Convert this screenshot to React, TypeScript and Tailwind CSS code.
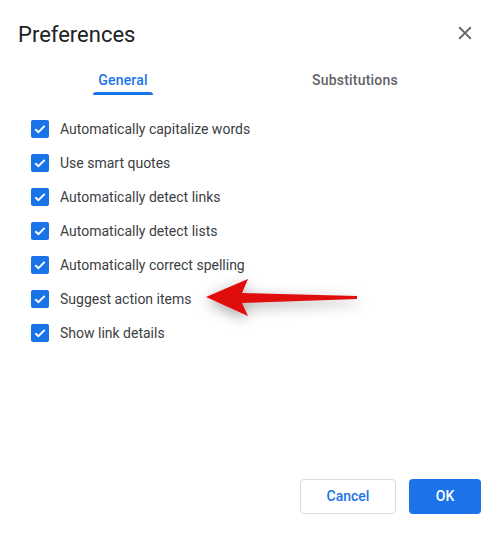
import React from "react";

const items = [
  "Automatically capitalize words",
  "Use smart quotes",
  "Automatically detect links",
  "Automatically detect lists",
  "Automatically correct spelling",
  "Suggest action items",
  "Show link details",
];

function Check() {
  return (
    <div className="w-[18px] h-[18px] rounded-[2px] bg-[#1a73e8] flex items-center justify-center shrink-0">
      <svg width="18" height="18" viewBox="0 0 18 18">
        <path d="M4.3 9.2 L7.4 12.2 L13.7 5.9" fill="none" stroke="#fff" strokeWidth="2" />
      </svg>
    </div>
  );
}

export default function App() {
  return (
    <div className="relative w-[502px] h-[535px] bg-white flex flex-col font-['Roboto',sans-serif] overflow-hidden">
      <div className="flex items-start justify-between pt-[21px] pl-[18px] pr-[26px]">
        <div className="text-[22px] leading-[28px] text-[#202124]">Preferences</div>
        <svg width="22" height="22" viewBox="0 0 24 24" className="mt-[1px]">
          <path
            fill="#5f6368"
            d="M19 6.41L17.59 5 12 10.59 6.41 5 5 6.41 10.59 12 5 17.59 6.41 19 12 13.41 17.59 19 19 17.59 13.41 12z"
          />
        </svg>
      </div>

      <div className="flex ml-[7px] mt-[21px]">
        <div className="w-[232px] flex justify-center">
          <div className="flex flex-col items-center">
            <div className="px-[5px] text-[14px] leading-[20px] font-medium text-[#1a73e8] tracking-[0.2px]">General</div>
            <div className="mt-[2px] h-[3px] w-full rounded-t-[3px] bg-[#1a73e8]" />
          </div>
        </div>
        <div className="w-[232px] flex justify-center">
          <div className="flex flex-col items-center">
            <div className="px-[5px] text-[14px] leading-[20px] font-medium text-[#5f6368] tracking-[0.2px]">Substitutions</div>
            <div className="mt-[2px] h-[3px]" />
          </div>
        </div>
      </div>

      <div className="flex flex-col mt-[17px] pl-[31px]">
        {items.map((t) => (
          <div key={t} className="h-[34px] flex items-center gap-[11px]">
            <Check />
            <span className="text-[14px] leading-[20px] text-[#3c4043]">{t}</span>
          </div>
        ))}
      </div>

      <div className="flex-1" />

      <div className="flex justify-end gap-[13px] pr-[21px] pb-[21px]">
        <button className="w-[96px] h-[35px] rounded-[4px] border border-[#dadce0] bg-white text-[14px] font-medium text-[#1a73e8]">
          Cancel
        </button>
        <button className="w-[72px] h-[35px] rounded-[4px] bg-[#1a73e8] text-[14px] font-medium text-white">
          OK
        </button>
      </div>

      <svg
        className="absolute left-[190px] top-[265px] overflow-visible"
        width="180"
        height="70"
        viewBox="0 0 180 70"
      >
        <defs>
          <filter id="sh" x="-30%" y="-60%" width="160%" height="220%">
            <feDropShadow dx="0" dy="4" stdDeviation="7" floodColor="#000" floodOpacity="0.35" />
          </filter>
        </defs>
        <polygon
          points="16,32 58,14 52,28 167,31 167,34 52,38 58,51"
          fill="#e00a0a"
          filter="url(#sh)"
        />
      </svg>
    </div>
  );
}
